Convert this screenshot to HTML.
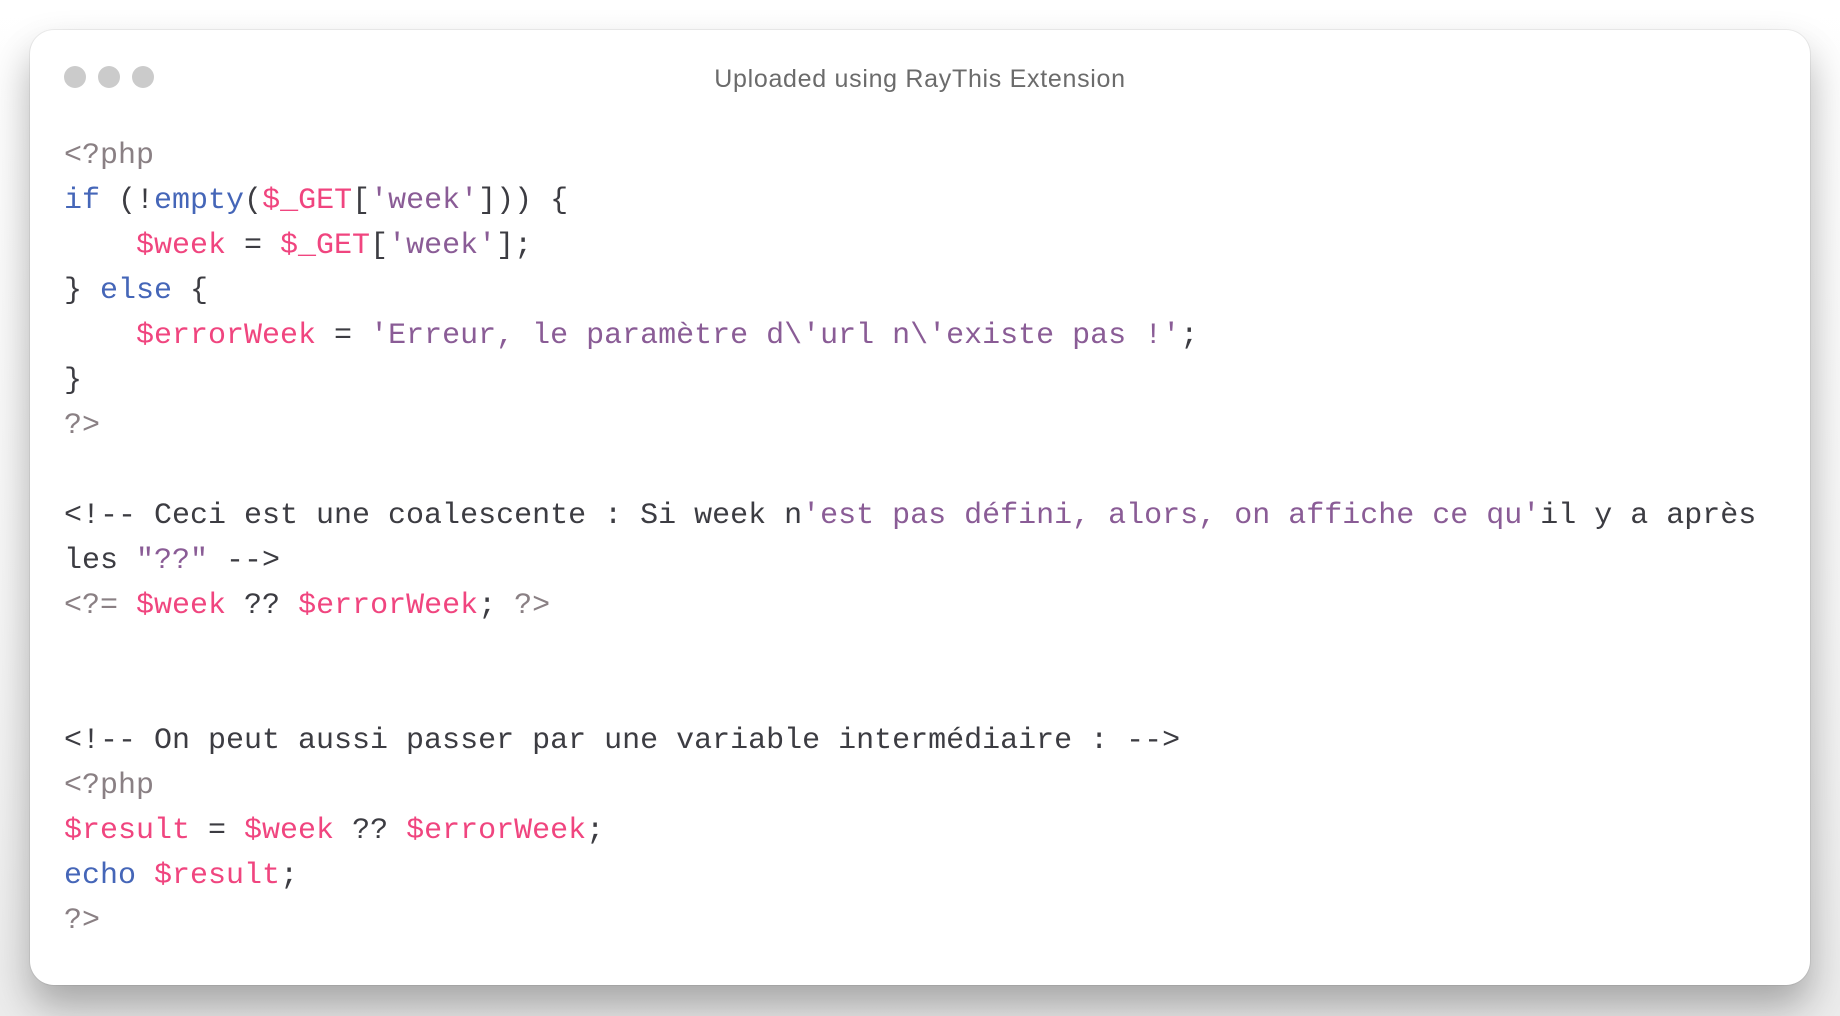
<!DOCTYPE html>
<html><head><meta charset="utf-8"><style>
html,body{margin:0;padding:0;width:1840px;height:1016px;overflow:hidden;background:linear-gradient(#ffffff 0%,#f6f6f6 60%,#ececec 100%);}
.win{position:absolute;left:30px;top:30px;width:1780px;height:955px;background:#fff;border-radius:24px;box-shadow:0 0 0 1px rgba(0,0,0,0.06),0 22px 40px rgba(0,0,0,0.30);}
.dot{position:absolute;top:66px;width:22px;height:22px;border-radius:50%;background:#cbcbcb;}
.title{position:absolute;left:0;width:1840px;top:64px;text-align:center;font-family:"Liberation Sans",sans-serif;font-size:25px;color:#6b6b6b;line-height:30px;letter-spacing:0.7px;}
pre{position:absolute;left:64px;top:134px;margin:0;font-family:"Liberation Mono","DejaVu Sans Mono",monospace;font-size:30px;line-height:45px;color:#3c3c42;}
.t{color:#8a8084}.k{color:#4566b8}.v{color:#f0457f}.s{color:#8a5c96}
</style></head><body>
<div class="win"></div>
<div class="dot" style="left:64px"></div><div class="dot" style="left:98px"></div><div class="dot" style="left:132px"></div>
<div class="title">Uploaded using RayThis Extension</div>
<pre><span class="t">&lt;?php</span>
<span class="k">if</span> (!<span class="k">empty</span>(<span class="v">$_GET</span>[<span class="s">'week'</span>])) {
    <span class="v">$week</span> = <span class="v">$_GET</span>[<span class="s">'week'</span>];
} <span class="k">else</span> {
    <span class="v">$errorWeek</span> = <span class="s">'Erreur, le paramètre d\'url n\'existe pas !'</span>;
}
<span class="t">?&gt;</span>

&lt;!-- Ceci est une coalescente : Si week n<span class="s">'est pas défini, alors, on affiche ce qu'</span>il y a après
les <span class="s">"??"</span> --&gt;
<span class="t">&lt;?=</span> <span class="v">$week</span> ?? <span class="v">$errorWeek</span>; <span class="t">?&gt;</span>


&lt;!-- On peut aussi passer par une variable intermédiaire : --&gt;
<span class="t">&lt;?php</span>
<span class="v">$result</span> = <span class="v">$week</span> ?? <span class="v">$errorWeek</span>;
<span class="k">echo</span> <span class="v">$result</span>;
<span class="t">?&gt;</span></pre>
</body></html>
